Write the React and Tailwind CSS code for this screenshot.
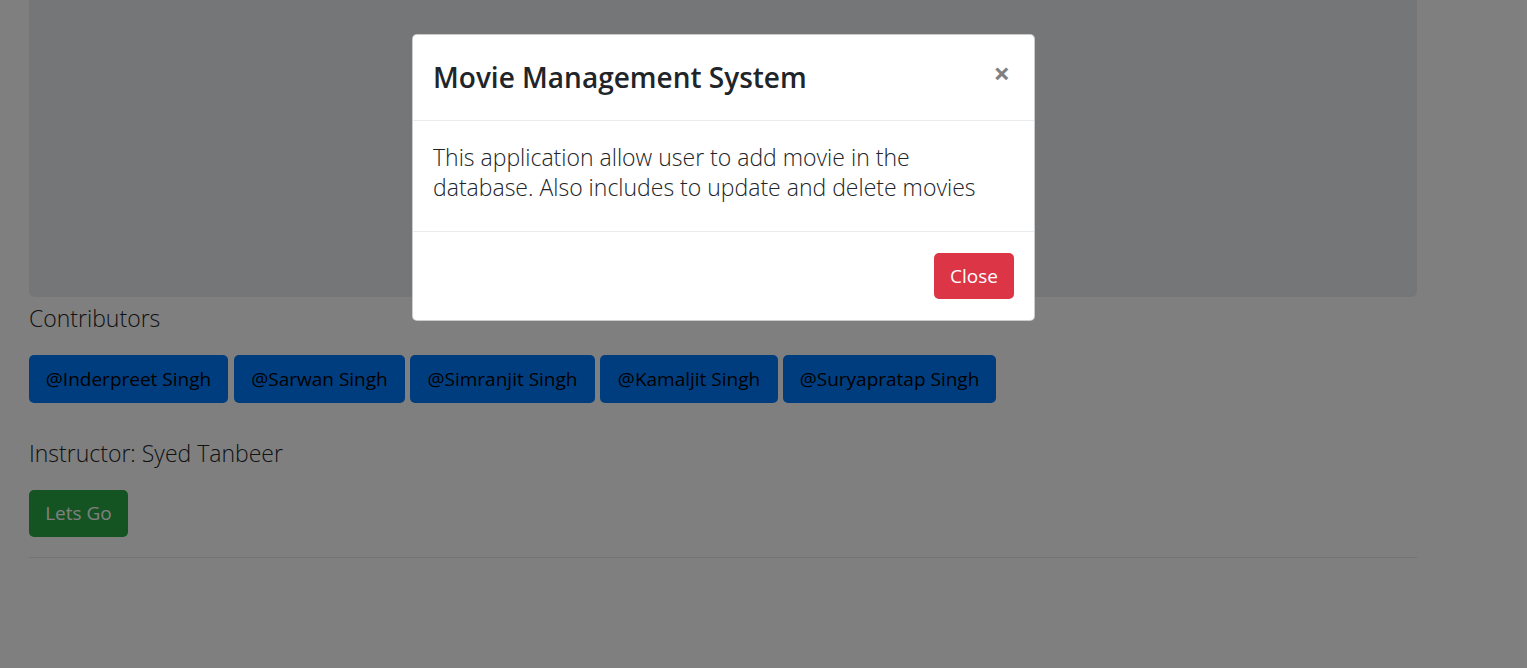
import React from 'react';

const contributors = [
  { name: '@Inderpreet Singh', w: 'w-[199px]' },
  { name: '@Sarwan Singh', w: 'w-[171px] ml-[1px]' },
  { name: '@Simranjit Singh', w: 'w-[185px]' },
  { name: '@Kamaljit Singh', w: 'w-[178px]' },
  { name: '@Suryapratap Singh', w: 'w-[213px]' },
];

const font = { fontFamily: '"Open Sans", "Noto Sans", sans-serif' };

export default function App() {
  return (
    <div className="relative min-h-[668px] bg-white" style={font}>
      <div className="ml-[29px] w-[1388px]">
        {/* jumbotron, its heading sits behind the modal */}
        <div className="h-[297px] bg-[#e9ecef] rounded-b-md flex items-center justify-center">
          <h1 className="text-[53px] font-light text-[#212529] mt-[60px] tracking-tight">Movie Management System</h1>
        </div>
        <h4 className="mt-[6px] text-[23px] leading-[30px] font-light text-[#212529]">Contributors</h4>
        <div className="mt-[22px] flex gap-[5px]">
          {contributors.map((c) => (
            <button key={c.name} className={`${c.w} h-[48px] rounded-[5px] bg-[#007bff] text-[19px] text-black whitespace-nowrap`}>
              {c.name}
            </button>
          ))}
        </div>
        <h4 className="mt-[35px] text-[23px] leading-[30px] font-light text-[#212529]">Instructor: Syed Tanbeer</h4>
        <button className="mt-[22px] w-[99px] h-[47px] rounded-[5px] bg-[#28a745] text-[19px] text-white">Lets Go</button>
        <div className="mt-[20px] h-px bg-[#e6e6e6]" />
      </div>

      <div className="absolute inset-0 bg-black/50">
        <div className="ml-[412px] mt-[34px] w-[623px] bg-white rounded-[5px] border border-black/20">
          <div className="h-[86px] px-[20px] flex items-center justify-between border-b border-[#e9ecef]">
            <h3 className="text-[28px] font-semibold text-[#212529] -mt-[1px]">Movie Management System</h3>
            <span className="text-[29px] font-bold text-[#808080] leading-none -mt-[10px] mr-[4px]">×</span>
          </div>
          <div className="px-[20px] pt-[21px] pb-[29px] border-b border-[#e9ecef]">
            <p className="text-[23px] leading-[30px] font-light text-[#212529]">
              This application allow user to add movie in the database. Also includes to update and delete movies
            </p>
          </div>
          <div className="h-[88px] px-[20px] flex items-center justify-end">
            <button className="w-[80px] h-[46px] rounded-[5px] bg-[#dc3545] text-white text-[19px]">Close</button>
          </div>
        </div>
      </div>
    </div>
  );
}
